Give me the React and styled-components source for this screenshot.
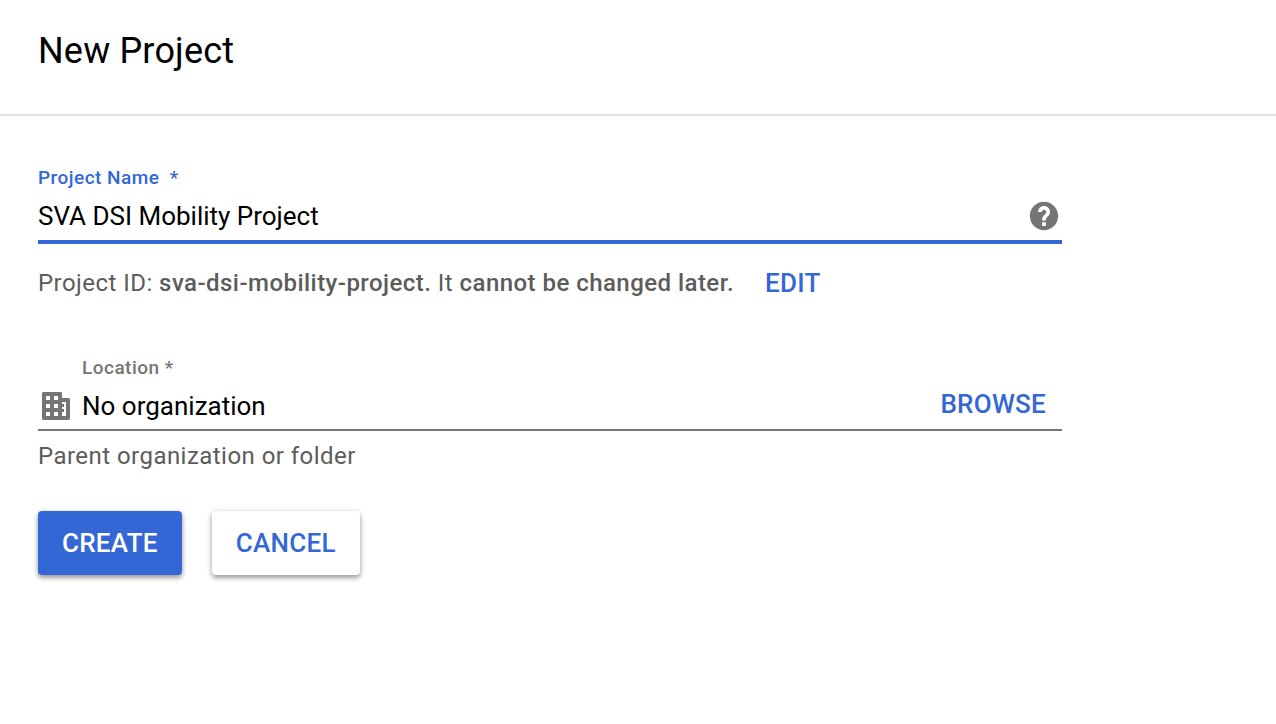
import React from "react";
import styled, { createGlobalStyle } from "styled-components";

const Global = createGlobalStyle`
  * { box-sizing: border-box; }
  body { margin: 0; background: #fff; color: #000; font-family: Roboto, sans-serif; }
`;

const Header = styled.header`
  padding: 26px 38px 38px;
  border-bottom: 2px solid #e0e0e0;
`;
const Title = styled.h1`
  margin: 0;
  font-size: 36px;
  line-height: 50px;
  font-weight: 400;
  letter-spacing: 0.005em;
`;
const Form = styled.form`
  max-width: 1100px;
  padding: 50px 38px 40px;
`;
const Label = styled.label`
  display: block;
  padding-left: ${(p) => (p.$inset ? "44px" : "0")};
  font-size: 19px;
  line-height: 24px;
  font-weight: 500;
  letter-spacing: 0.025em;
  white-space: pre;
  color: ${(p) => (p.$active ? "#3367d6" : "#757575")};
`;
const Field = styled.div`
  display: flex;
  align-items: center;
  gap: 8px;
  height: ${(p) => (p.$active ? "54px" : "51px")};
  padding-top: 2px;
  border-bottom: ${(p) => (p.$active ? "4px solid #3367d6" : "2px solid #757575")};
`;
const Input = styled.input`
  flex: 1;
  min-width: 0;
  padding: 0;
  border: 0;
  outline: 0;
  background: transparent;
  color: #000;
  font: 400 26px/32px Roboto, sans-serif;
`;
const Icon = styled.svg`
  flex: none;
  width: 36px;
  height: 36px;
  padding: 1px;
  fill: #757575;
`;
const Note = styled.div`
  display: flex;
  align-items: center;
  gap: 31px;
  margin: 20px 0 55px;
`;
const Hint = styled.p`
  margin: 0;
  padding-top: ${(p) => (p.$below ? "7px" : "1px")};
  color: #5c5c5c;
  font-size: 24px;
  line-height: 36px;
  letter-spacing: 0.019em;
`;
const Strong = styled.strong`
  font-weight: 500;
`;
const Button = styled.button`
  padding: 0;
  border: 0;
  border-radius: 4px;
  background: transparent;
  color: #3367d6;
  font: 500 26px/32px Roboto, sans-serif;
  letter-spacing: 0.01em;
  cursor: pointer;
`;
const Raised = styled(Button)`
  height: 64px;
  padding: 0 24px;
  background: ${(p) => (p.$primary ? "#3367d6" : "#fff")};
  color: ${(p) => (p.$primary ? "#fff" : "#3367d6")};
  box-shadow: 0 3px 5px rgba(0, 0, 0, 0.36), 0 0 6px rgba(0, 0, 0, 0.1);
`;
const Browse = styled(Button)`
  padding-bottom: 4px;
  margin-right: 16px;
`;
const Actions = styled.div`
  display: flex;
  gap: 30px;
  margin-top: 37px;
`;

export default function App() {
  return (
    <>
      <Global />
      <Header><Title>New Project</Title></Header>
      <main>
        <Form onSubmit={(e) => e.preventDefault()}>
          <Label htmlFor="name" $active>{"Project Name  *"}</Label>
          <Field $active>
            <Input id="name" defaultValue="SVA DSI Mobility Project" />
            <Icon viewBox="0 0 24 24" role="img" aria-label="Help">
              <path d="M12 2C6.48 2 2 6.48 2 12s4.48 10 10 10 10-4.48 10-10S17.52 2 12 2zm1.3 17h-2.6v-2.6h2.6V19zm2.2-7.6l-.9.92c-.8.82-1.3 1.38-1.3 2.78h-2.6v-.6c0-1.1.45-2.1 1.17-2.83l1.24-1.26c.37-.36.5-.76.5-1.31 0-.9-.71-1.6-1.61-1.6s-1.6.7-1.6 1.6H7.8C7.8 6.79 9.68 5 12 5s4.2 1.79 4.2 4c0 .88-.25 1.8-.7 2.4z" />
            </Icon>
          </Field>
          <Note>
            <Hint>Project ID: <Strong>sva-dsi-mobility-project.</Strong> It <Strong>cannot be changed later.</Strong></Hint>
            <Button type="button">EDIT</Button>
          </Note>
          <Label htmlFor="location" $inset>Location *</Label>
          <Field>
            <Icon viewBox="0 0 34 34" aria-hidden="true">
              <path fillRule="evenodd" d="M4.500 3h17c.8 0 1.500.7 1.500 1.500V9h6.500c.8 0 1.500.7 1.500 1.500v19c0 .8-.7 1.500-1.500 1.500h-25c-.8 0-1.500-.7-1.500-1.500v-25C3 3.700 3.700 3 4.500 3zM7 7v4h4V7zM15 7v4h4V7zM7 15v4h4v-4zM15 15v4h4v-4zM7 23v4h4v-4zM15 23v4h4v-4zM23 13v2h2v3h-2v2h2v3h-2v4h4V13z" />
            </Icon>
            <Input id="location" defaultValue="No organization" />
            <Browse type="button">BROWSE</Browse>
          </Field>
          <Hint $below>Parent organization or folder</Hint>
          <Actions>
            <Raised type="submit" $primary>CREATE</Raised>
            <Raised type="button">CANCEL</Raised>
          </Actions>
        </Form>
      </main>
    </>
  );
}
